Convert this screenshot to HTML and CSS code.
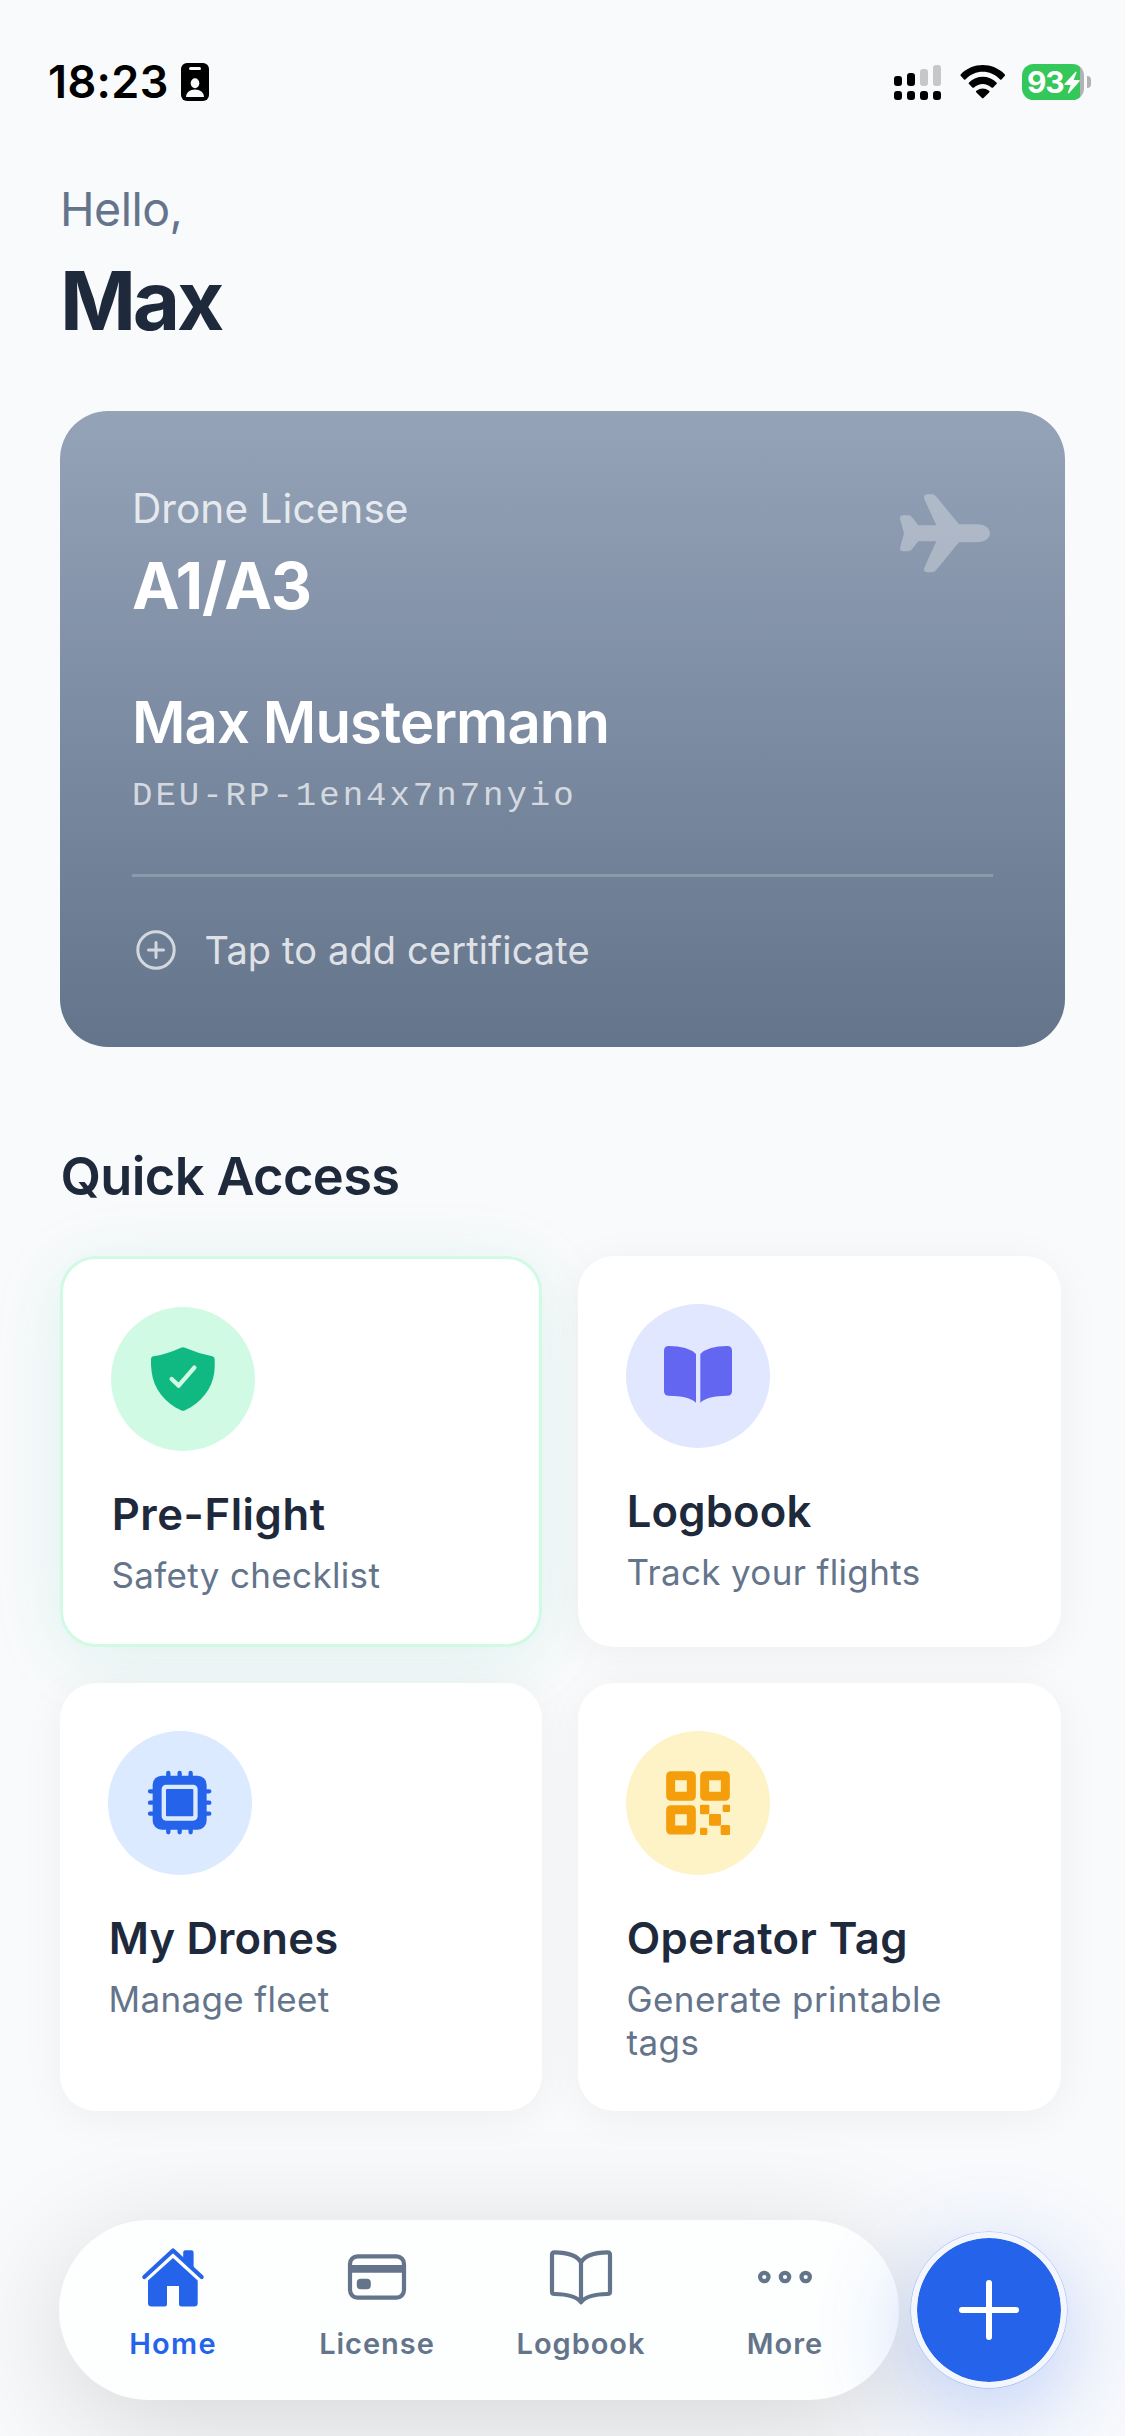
FILE: index.html
```
<!DOCTYPE html>
<html lang="en">
<head>
<meta charset="utf-8">
<title>Home</title>
<link rel="stylesheet" href="styles.css">
</head>
<body>
<div class="screen">
  <div class="status">
    <div class="status-left">
      <span class="time">18:23</span>
      <svg class="badge" viewBox="0 0 28 38"><rect width="28" height="38" rx="6"/><rect x="8" y="4" width="12" height="3" rx="1.5" fill="#f9fafc"/><ellipse cx="14" cy="20.3" rx="4.3" ry="5" fill="#f9fafc"/><path d="M5 34c0-4.500 4-7.500 9-7.500s9 3 9 7.500z" fill="#f9fafc"/></svg>
    </div>
    <div class="status-right">
      <svg class="signal" viewBox="0 0 47 35"><rect y="11" width="8" height="10" rx="3"/><rect x="13" y="8" width="8" height="13" rx="3"/><g fill="#c7c7ca"><rect x="26" y="4" width="8" height="17" rx="3"/><rect x="39" y="0" width="8" height="21" rx="3"/></g><rect y="26" width="8" height="9" rx="3"/><rect x="13" y="26" width="8" height="9" rx="3"/><rect x="26" y="26" width="8" height="9" rx="3"/><rect x="39" y="26" width="8" height="9" rx="3"/></svg>
      <svg class="wifi" viewBox="301 74 136 100"><path d="M303 102C340 65 398 65 435 102q2 2 0 4l-10 11q-2 2-4 0C391 86 347 86 317 117q-2 2-4 0l-10-11q-2-2 0-4z"/><path d="M328 126C350 103 388 103 410 126q3 2 0 5l-10 10q-2 2-5 0C380 127 358 127 343 141q-3 2-5 0l-10-10q-3-3 0-5z"/><path d="M350 151q19-14 38 0 3 2 0 5l-16 16q-3 3-6 0l-16-16q-3-3 0-5z"/></svg>
      <div class="battery">
        <div class="battery-body"><span>93</span><svg viewBox="613 92 48 68"><path d="M648 94L614 131q-1 3 2 3h17l-9 24q3 3 6-1l30-34q1-4-2-4h-16l9-23q-1-3-3-2z" fill="#fff"/></svg></div>
        <div class="battery-cap"></div>
      </div>
    </div>
  </div>

  <main class="content">
    <div class="hello">Hello,</div>
    <h1 class="user">Max</h1>

    <section class="license">
      <svg class="plane" viewBox="150 281 271 236"><path d="M150 355q0-10 10-10h14q7 0 12 6l19 24h54L223 296q-4-14 9-14h14q7 0 12 6l69 84h54c24 0 39 12 39 27s-15 27-39 27h-54l-69 84q-5 6-12 6h-14q-13 0-9-14l36-79h-54l-19 24q-5 6-12 6h-14q-10 0-10-10l12-44z"/></svg>
      <div class="license-label">Drone License</div>
      <div class="license-class">A1/A3</div>
      <div class="license-name">Max Mustermann</div>
      <div class="license-id">DEU-RP-1en4x7n7nyio</div>
      <div class="license-add">
        <svg viewBox="0 0 48 48" fill="none" stroke="currentColor" stroke-width="3" stroke-linecap="round"><circle cx="24" cy="24" r="18.200"/><path d="M24 16.500v15M16.500 24h15"/></svg>
        <span>Tap to add certificate</span>
      </div>
    </section>

    <h2 class="section-title">Quick Access</h2>

    <div class="grid">
      <div class="card card-featured">
        <div class="disc disc-green"><svg class="i-shield" viewBox="333 351 192 192"><path d="M423 353q6-3 12 0 42 18 82 26 7 1 7 9 1 22-1 38c-6 50-39 92-88 115q-6 3-12 0c-49-23-82-65-88-115q-3-20-2-38 0-8 8-9 40-7 82-26z" fill="#10b981"/><path d="M395 447l21 20 47-54" fill="none" stroke="#d1fae5" stroke-width="13" stroke-linecap="round" stroke-linejoin="round"/></svg></div>
        <div class="card-title t-pre">Pre-Flight</div>
        <div class="card-sub">Safety checklist</div>
      </div>
      <div class="card">
        <div class="disc disc-indigo"><svg class="i-book" viewBox="312 349 204 170" fill="#6366f1"><path d="M312 363q0-14 14-14 58 0 82 24v146q-22-21-82-21-14 0-14-14z"/><path d="M516 363q0-14-14-14-58 0-81 24v146q21-21 81-21 14 0 14-14z"/></svg></div>
        <div class="card-title t-log">Logbook</div>
        <div class="card-sub">Track your flights</div>
      </div>
      <div class="card">
        <div class="disc disc-blue"><svg class="i-chip" viewBox="325 304 190 190"><path d="M386 310v178M420 310v178M453 310v178M331 365h178M331 399h178M331 432h178" stroke="#2563eb" stroke-width="13" stroke-linecap="round"/><rect x="339" y="318" width="162" height="162" rx="27" fill="#2563eb"/><rect x="366" y="345" width="108" height="108" rx="13" fill="#dbeafe"/><rect x="379" y="358" width="82" height="82" rx="3" fill="#2563eb"/></svg></div>
        <div class="card-title t-drones">My Drones</div>
        <div class="card-sub">Manage fleet</div>
      </div>
      <div class="card">
        <div class="disc disc-amber"><svg class="i-qr" viewBox="318 303 192 192" fill="#f59e0b"><g fill="none" stroke="#f59e0b" stroke-width="27" stroke-linejoin="round"><path d="M332 317h62v62h-62zM434 317h62v62h-62zM332 419h62v61h-62z"/></g><rect x="420" y="404" width="28" height="29" rx="4"/><rect x="488" y="404" width="22" height="22" rx="4"/><rect x="447" y="432" width="36" height="35" rx="4"/><rect x="420" y="473" width="22" height="22" rx="4"/><rect x="482" y="465" width="28" height="30" rx="4"/></svg></div>
        <div class="card-title t-tag">Operator Tag</div>
        <div class="card-sub s-tag">Generate printable tags</div>
      </div>
    </div>
  </main>

  <div class="dock">
    <nav class="tabs">
      <a class="tab active"><svg viewBox="0 0 72 72" fill="currentColor"><path d="M7.300 36L36 9.500 64.700 36" fill="none" stroke="currentColor" stroke-width="4.200" stroke-linecap="round" stroke-linejoin="round"/><path d="M46.200 18.500V11.500q0-2.200 2.200-2.200h6q2.200 0 2.200 2.200V28z"/><path d="M36 17L60.700 39.500V62q0 3.500-3.500 3.500H44.500q-2.500 0-2.500-2.500V45H30v18q0 2.500-2.500 2.500H14.500q-3.500 0-3.500-3.500V39.500z"/></svg><span class="l-home">Home</span></a>
      <a class="tab"><svg viewBox="0 0 72 72" fill="currentColor"><rect x="9" y="15.400" width="54" height="41.200" rx="7.500" fill="none" stroke="currentColor" stroke-width="4.200"/><path d="M9 24h54v7.800H9z"/><rect x="15.800" y="37.700" width="14" height="10.600" rx="4"/></svg><span>License</span></a>
      <a class="tab"><svg viewBox="0 0 72 72" fill="none" stroke="currentColor" stroke-width="4.200" stroke-linejoin="round" stroke-linecap="round"><path d="M36 21.500C32 13.500 20 11.600 9.500 11.400q-2.500 0-2.500 2.500v36.600q0 2.500 2.500 2.500C20 53.200 31 54.500 36 61.200 41 54.500 52 53.200 62.500 53q2.500 0 2.500-2.500V13.900q0-2.500-2.500-2.500C52 11.600 40 13.500 36 21.500zV60"/></svg><span>Logbook</span></a>
      <a class="tab"><svg viewBox="0 0 72 72" fill="none" stroke="currentColor" stroke-width="4.200"><circle cx="15.300" cy="36" r="4.200"/><circle cx="36" cy="36" r="4.200"/><circle cx="56.700" cy="36" r="4.200"/></svg><span>More</span></a>
    </nav>
    <div class="fab"><svg viewBox="0 0 60 60" fill="none" stroke="#fff" stroke-width="6" stroke-linecap="round"><path d="M30 3v54M3 30h54"/></svg></div>
  </div>
</div>
</body>
</html>
```
FILE: styles.css
```
* { box-sizing: border-box; margin: 0; padding: 0; }
body { background: #f9fafc; font-family: Inter, "Noto Sans", sans-serif; color: #1e293b; }
svg { display: block; overflow: visible; }

.screen { width: 1125px; height: 2436px; display: flex; flex-direction: column; overflow: hidden; }

.status { height: 164px; padding: 0 34px 0 48px; display: flex; justify-content: space-between; align-items: center; color: #000; flex: none; }
.status-left { display: flex; align-items: center; gap: 12px; }
.time { font-size: 45px; font-weight: 600; letter-spacing: 0.37px; line-height: 60px; }
.badge { width: 28px; height: 38px; }
.status-right { display: flex; align-items: center; }
.signal { width: 47px; height: 35px; margin-right: 19px; }
.wifi { width: 45.5px; height: 33.5px; margin-right: 16.5px; }
.battery { display: flex; align-items: center; gap: 3px; }
.battery-body { width: 62px; height: 36px; border-radius: 11.5px; background: linear-gradient(90deg, #34c759 58px, #b2b2b5 58px); display: flex; align-items: center; padding-left: 5px; }
.battery-body span { color: #fff; font-size: 30px; font-weight: 700; line-height: 36px; letter-spacing: -1.2px; }
.battery-body svg { width: 16px; height: 22.6px; margin-left: 1px; }
.battery-cap { width: 4px; height: 12px; border-radius: 0 4px 4px 0; background: #b2b2b5; }

.content { padding: 15px 60px 0; }
.hello { font-size: 46.5px; line-height: 60px; letter-spacing: -0.5px; color: #64748b; }
.user { font-size: 81.6px; font-weight: 700; line-height: 100px; letter-spacing: -3.2px; margin-top: 12px; }

.license { position: relative; height: 636px; margin-top: 60px; padding: 73px 72px 0; border-radius: 48px; color: #fff; background: linear-gradient(180deg, #94a3b8, #64748b); }
.plane { position: absolute; left: 840px; top: 82.5px; width: 90.3px; height: 78.7px; fill: rgba(255, 255, 255, 0.3); }
.license-label { font-size: 40.6px; line-height: 50px; letter-spacing: 0.05px; color: rgba(255, 255, 255, 0.8); }
.license-class { font-size: 64px; font-weight: 700; line-height: 80px; letter-spacing: -1.1px; margin-top: 12px; }
.license-name { font-size: 58px; font-weight: 600; line-height: 72px; letter-spacing: -0.9px; margin-top: 60px; }
.license-id { font-family: "Courier New", "Liberation Mono", monospace; font-size: 34px; line-height: 48px; letter-spacing: 3px; margin-top: 14px; color: rgba(255, 255, 255, 0.7); }
.license-add { margin-top: 54px; padding-top: 49px; border-top: 3px solid rgba(255, 255, 255, 0.2); display: flex; align-items: center; gap: 24.5px; font-size: 38px; line-height: 48px; letter-spacing: 0.13px; color: rgba(255, 255, 255, 0.8); }
.license-add svg { width: 48px; height: 48px; color: rgba(255, 255, 255, 0.7); }

.section-title { margin-top: 96px; padding-left: 0.5px; font-size: 52.4px; font-weight: 600; line-height: 66px; letter-spacing: -0.65px; }

.grid { margin-top: 47px; display: grid; grid-template-columns: 482px 483px; grid-template-rows: 391px 428px; gap: 36px; }
.card { background: #fff; border-radius: 36px; padding: 48px; box-shadow: 0 6px 44px rgba(0, 0, 0, 0.05); }
.card-featured { border: 3px solid #d1fae5; box-shadow: 0 12px 72px rgba(16, 185, 129, 0.12); }
.disc { width: 144px; height: 144px; border-radius: 50%; display: flex; align-items: center; justify-content: center; }
.disc-green { background: #d1fae5; }
.disc-indigo { background: #e0e7ff; }
.disc-blue { background: #dbeafe; }
.disc-amber { background: #fef3c7; }
.i-shield, .i-qr { width: 64px; height: 64px; }
.i-book { width: 68px; height: 56.7px; margin-top: -3px; }
.i-chip { width: 63.3px; height: 63.3px; }
.card-title { margin-top: 36px; padding-left: 0.7px; font-size: 43.6px; font-weight: 600; line-height: 56px; letter-spacing: 0.3px; }
.t-pre { letter-spacing: 0.56px; }
.t-log, .t-drones { letter-spacing: 0.18px; }
.t-tag { letter-spacing: 0.42px; }
.card-sub { margin-top: 11px; padding-left: 0.5px; font-size: 35px; line-height: 43px; letter-spacing: 0.34px; color: #64748b; }
.s-tag { max-width: 370px; letter-spacing: 0.42px; }

.dock { margin-top: auto; margin-bottom: 36px; padding-left: 59px; display: flex; align-items: center; gap: 12px; flex: none; }
.tabs { width: 840px; height: 180px; padding: 21px 12px 0; border-radius: 90px; background: #fdfefe; box-shadow: 0 24px 120px rgba(0, 0, 0, 0.15); display: flex; }
.tab { flex: 1; display: flex; flex-direction: column; align-items: center; gap: 12.5px; font-size: 29px; font-weight: 600; line-height: 36px; letter-spacing: 0.98px; color: #64748b; }
.tab svg { width: 72px; height: 72px; }
.active { color: #2563eb; }
.l-home { letter-spacing: 1.3px; }
.fab { width: 156px; height: 156px; border-radius: 50%; border: 6px solid #f3f6fd; background: #2563eb; background-clip: padding-box; box-shadow: 0 24px 96px rgba(37, 99, 235, 0.3), 0 0 0 0.5px #a9c0f5; display: flex; align-items: center; justify-content: center; }
.fab svg { width: 60px; height: 60px; }
```
